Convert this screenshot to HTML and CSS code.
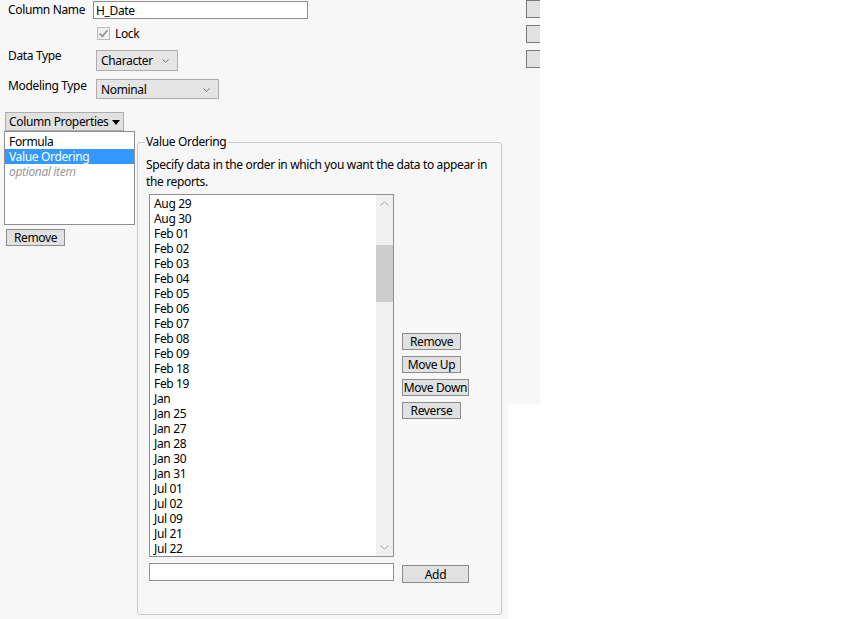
FILE: index.html
```html
<!DOCTYPE html>
<html lang="en">
<head>
    <meta charset="UTF-8">
    <title>Column Info</title>
    <link rel="stylesheet" href="styles.css">
</head>
<body>
    <div class="window">
        <!-- Main column info panel -->
        <div class="panel">
            <div class="row row-name">
                <label class="field-label">Column Name</label>
                <input class="text-input name-input" type="text" value="H_Date">
            </div>

            <div class="row row-lock">
                <span class="checkbox"><svg width="11" height="11" viewBox="0 0 11 11"><path d="M1.5 5.5 L4.3 8.3 L9.5 2.2" fill="none" stroke="#8c8c8c" stroke-width="1.6"/></svg></span>
                <span class="lock-text">Lock</span>
            </div>

            <div class="row row-type">
                <label class="field-label">Data Type</label>
                <div class="select select-data">Character<svg class="chev" width="7" height="4" viewBox="0 0 7 4"><path d="M0.5 0.5 L3.5 3.3 L6.5 0.5" fill="none" stroke="#707070" stroke-width="1"/></svg></div>
            </div>

            <div class="row row-model">
                <label class="field-label">Modeling Type</label>
                <div class="select select-model">Nominal<svg class="chev" width="7" height="4" viewBox="0 0 7 4"><path d="M0.5 0.5 L3.5 3.3 L6.5 0.5" fill="none" stroke="#707070" stroke-width="1"/></svg></div>
            </div>

            <div class="props">
                <!-- Property list on the left -->
                <div class="props-left">
                    <button class="btn btn-props">Column Properties <svg class="tri" width="8" height="5" viewBox="0 0 8 5"><path d="M0 0 H8 L4 5 Z" fill="#000"/></svg></button>
                    <ul class="prop-list">
                        <li>Formula</li>
                        <li class="selected">Value Ordering</li>
                        <li class="optional">optional item</li>
                    </ul>
                    <button class="btn btn-remove-prop">Remove</button>
                </div>

                <!-- Value ordering group -->
                <fieldset class="group">
                    <legend>Value Ordering</legend>
                    <p class="desc">Specify data in the order in which you want the data to appear in the reports.</p>

                    <div class="order-row">
                        <div class="value-list">
                            <ul class="values" id="values"></ul>
                            <div class="scrollbar">
                                <span class="arrow arrow-up"><svg width="9" height="5" viewBox="0 0 9 5"><path d="M0.5 4.5 L4.5 0.8 L8.5 4.5" fill="none" stroke="#a6a6a6" stroke-width="1"/></svg></span>
                                <span class="thumb"></span>
                                <span class="arrow arrow-down"><svg width="9" height="5" viewBox="0 0 9 5"><path d="M0.5 0.5 L4.5 4.2 L8.5 0.5" fill="none" stroke="#a6a6a6" stroke-width="1"/></svg></span>
                            </div>
                        </div>
                        <div class="order-buttons">
                            <button class="btn btn-small">Remove</button>
                            <button class="btn btn-small">Move Up</button>
                            <button class="btn btn-wide">Move Down</button>
                            <button class="btn btn-small">Reverse</button>
                        </div>
                    </div>

                    <div class="add-row">
                        <input class="text-input add-input" type="text">
                        <button class="btn btn-add">Add</button>
                    </div>
                </fieldset>
            </div>
        </div>

        <!-- Cut off edge of the next pane -->
        <div class="side">
            <span class="side-line"></span>
            <div class="side-buttons">
                <span class="side-btn"></span>
                <span class="side-btn"></span>
                <span class="side-btn"></span>
            </div>
        </div>
    </div>

    <script>
        const values = ["Aug 29", "Aug 30", "Feb 01", "Feb 02", "Feb 03", "Feb 04", "Feb 05",
            "Feb 06", "Feb 07", "Feb 08", "Feb 09", "Feb 18", "Feb 19", "Jan", "Jan 25",
            "Jan 27", "Jan 28", "Jan 30", "Jan 31", "Jul 01", "Jul 02", "Jul 09", "Jul 21", "Jul 22"];
        const list = document.getElementById("values");
        values.forEach(v => {
            const li = document.createElement("li");
            li.textContent = v;
            list.appendChild(li);
        });
    </script>
</body>
</html>
```

FILE: styles.css
```css
body {
    margin: 0;
    background: #fff;
    font-family: "Noto Sans", "Open Sans", sans-serif;
    font-size: 12px;
    letter-spacing: -0.35px;
    color: #000;
}

.window {
    display: flex;
    align-items: flex-start;
}

.panel {
    width: 508px;
    height: 619px;
    background: #f7f7f7;
    overflow: hidden;
}

/* Top form rows */
.row {
    display: flex;
    align-items: center;
}

.field-label {
    line-height: 16px;
    padding-left: 8px;
    white-space: nowrap;
}

.row-name {
    margin-top: 1px;
}

.row-name .field-label {
    width: 85px;
}

.text-input {
    box-sizing: border-box;
    margin: 0;
    height: 18px;
    border: 1px solid #8f8f8f;
    background: #fff;
    font-family: inherit;
    font-size: 12px;
    letter-spacing: -0.35px;
    padding: 0 2px;
    outline: none;
}

.name-input {
    width: 215px;
}

.row-lock {
    margin-top: 8px;
    padding-left: 97px;
    height: 13px;
}

.checkbox {
    box-sizing: border-box;
    width: 13px;
    height: 13px;
    border: 1px solid #bcbcbc;
    background: #f0f0f0;
    display: flex;
    align-items: center;
    justify-content: center;
}

.lock-text {
    margin-left: 5px;
    line-height: 16px;
}

.row-type {
    margin-top: 10px;
    align-items: flex-start;
}

.row-model {
    margin-top: 8px;
    align-items: flex-start;
}

.row-type .field-label,
.row-model .field-label {
    width: 88px;
    margin-top: -2px;
}

.row-model .field-label {
    margin-top: -1px;
}

.select {
    box-sizing: border-box;
    position: relative;
    height: 21px;
    border: 1px solid #adadad;
    background: #e5e5e5;
    line-height: 19px;
    padding-left: 4px;
}

.select-data {
    width: 82px;
}

.select-model {
    width: 123px;
    height: 20px;
    line-height: 19px;
}

.chev {
    position: absolute;
    right: 8px;
    top: 8px;
}

/* Buttons */
.btn {
    box-sizing: border-box;
    margin: 0;
    padding: 0;
    border: 1px solid #8c8c8c;
    background: #e1e1e1;
    font-family: inherit;
    font-size: 12px;
    letter-spacing: -0.35px;
    color: #000;
    line-height: 15px;
    text-align: center;
    white-space: nowrap;
}

/* Column properties area */
.props {
    display: flex;
    align-items: flex-start;
    margin-top: 13px;
}

.props-left {
    width: 133px;
    padding-left: 4px;
    display: flex;
    flex-direction: column;
    align-items: flex-start;
}

.btn-props {
    margin-left: 1px;
    width: 119px;
    height: 19px;
    border-color: #adadad;
    text-align: left;
    padding-left: 3px;
}

.tri {
    vertical-align: 1px;
    margin-left: 1px;
}

.prop-list {
    box-sizing: border-box;
    list-style: none;
    margin: 0;
    padding: 2px 0 0;
    width: 131px;
    height: 94px;
    border: 1px solid #8f8f8f;
    background: #fff;
}

.prop-list li {
    line-height: 15px;
    padding-left: 4px;
}

.prop-list .selected {
    background: #3399ff;
    color: #fff;
}

.prop-list .optional {
    color: #9a9a9a;
    font-style: italic;
}

.btn-remove-prop {
    margin: 4px 0 0 2px;
    width: 59px;
    height: 17px;
}

/* Value ordering group */
.group {
    box-sizing: border-box;
    margin: 22px 0 0 0;
    width: 365px;
    min-width: 0;
    border: 1px solid #c9c9c9;
    border-radius: 3px;
    padding: 6px 8px 31px 8px;
}

.group legend {
    padding: 0 2px 0 1px;
    margin-left: -1px;
    line-height: 16px;
}

.desc {
    margin: 0;
    line-height: 17px;
    width: 348px;
}

.order-row {
    display: flex;
    align-items: flex-start;
    margin-top: 4px;
}

.value-list {
    box-sizing: border-box;
    display: flex;
    margin-left: 3px;
    width: 245px;
    height: 363px;
    border: 1px solid #8f8f8f;
    background: #fff;
}

.values {
    flex: 1;
    list-style: none;
    margin: 0;
    padding: 1px 0 0 4px;
    overflow: hidden;
}

.values li {
    line-height: 15px;
}

.scrollbar {
    width: 17px;
    background: #f0f0f0;
    display: flex;
    flex-direction: column;
    align-items: center;
}

.arrow {
    height: 17px;
    display: flex;
    align-items: center;
    justify-content: center;
}

.thumb {
    width: 17px;
    height: 57px;
    margin-top: 33px;
    background: #cdcdcd;
}

.arrow-down {
    margin-top: auto;
}

.order-buttons {
    display: flex;
    flex-direction: column;
    align-items: flex-start;
    gap: 6px;
    margin: 139px 0 0 8px;
}

.btn-small {
    width: 59px;
    height: 17px;
}

.btn-wide {
    width: 67px;
    height: 17px;
}

.add-row {
    display: flex;
    align-items: flex-start;
    margin-top: 6px;
    margin-left: 3px;
}

.add-input {
    width: 245px;
}

.btn-add {
    margin: 2px 0 0 8px;
    width: 67px;
    height: 18px;
}

/* Edge of the neighbouring pane */
.side {
    display: flex;
    width: 32px;
    height: 404px;
    background: #f7f7f7;
    overflow: hidden;
}

.side-line {
    margin-left: 4px;
    width: 1px;
    height: 393px;
    background: #a8a8a8;
}

.side-buttons {
    display: flex;
    flex-direction: column;
    gap: 7px;
    margin-left: 14px;
}

.side-btn {
    box-sizing: border-box;
    width: 30px;
    height: 18px;
    border: 1px solid #7a7a7a;
    background: #e1e1e1;
}
```
